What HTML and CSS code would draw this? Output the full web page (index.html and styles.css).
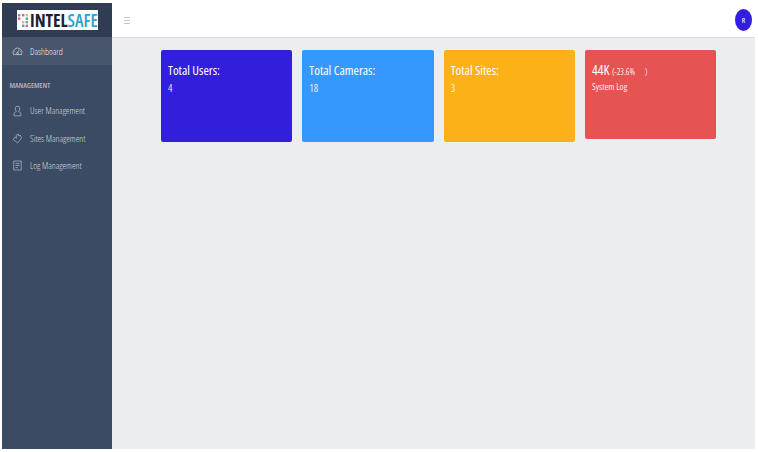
FILE: index.html
```html
<!DOCTYPE html>
<html lang="en">
<head>
<meta charset="utf-8">
<title>Intelsafe Dashboard</title>
<link rel="stylesheet" href="styles.css">
</head>
<body>
<div class="app">
  <aside class="sidebar">
    <div class="brand">
      <div class="logo">
        <svg class="logo-dots" width="10" height="13" viewBox="0 0 10 13">
          <g>
            <rect x="0" y="0" width="2.400" height="2.400" fill="#8a8fb0"/><rect x="4" y="0" width="2.400" height="2.400" fill="#e05a9a"/><rect x="7.600" y="0" width="2.400" height="2.400" fill="#d9c24a"/>
            <rect x="0" y="3.500" width="2.400" height="2.400" fill="#e05a9a"/><rect x="7.600" y="3.500" width="2.400" height="2.400" fill="#35a8c8"/>
            <rect x="4" y="7" width="2.400" height="2.400" fill="#d9c24a"/><rect x="7.600" y="7" width="2.400" height="2.400" fill="#8a8fb0"/>
            <rect x="4" y="10.600" width="2.400" height="2.400" fill="#35a8c8"/><rect x="7.600" y="10.600" width="2.400" height="2.400" fill="#e05a9a"/>
          </g>
        </svg>
        <span class="logo-text"><span class="logo-dark">INTEL</span><span class="logo-blue">SAFE</span></span>
      </div>
    </div>
    <nav class="nav">
      <a class="nav-item active">
        <svg class="nav-icon" viewBox="0 0 16 16"><path d="M2.500 13a6.500 6.500 0 1 1 11 0l-1-.5H3.500zM8 9.500l2.500-4M8 9.500a1.300 1.300 0 1 0 .1 0M3.500 8h1M11.500 8h1"/></svg>
        <span class="nav-label">Dashboard</span>
      </a>
      <div class="nav-title"><span>MANAGEMENT</span></div>
      <a class="nav-item">
        <svg class="nav-icon icon-tall" viewBox="0 0 16 16"><path d="M8 1a3.200 3.200 0 0 1 3.200 3.200c0 2-1 3.800-1.500 4.800 1 .8 3.300 1 3.300 3v3H3v-3c0-2 2.300-2.200 3.300-3C5.800 8 4.800 6.200 4.800 4.200A3.200 3.200 0 0 1 8 1z"/></svg>
        <span class="nav-label">User Management</span>
      </a>
      <a class="nav-item">
        <svg class="nav-icon" viewBox="0 0 16 16"><path d="M9 1.500l.5 2.500 3-.5 1 3.500-1 2.500-4.500 5-6.500-5.500 3-3 2 1.500L6 3.500z"/></svg>
        <span class="nav-label">Sites Management</span>
      </a>
      <a class="nav-item">
        <svg class="nav-icon" viewBox="0 0 16 16"><path d="M2.500 1.500h11v13h-11zM5 5h6M5 8h6M5 11h3.500"/></svg>
        <span class="nav-label">Log Management</span>
      </a>
    </nav>
  </aside>
  <div class="content">
    <header class="topbar">
      <svg class="menu-icon" width="6" height="7" viewBox="0 0 6 7"><path d="M0 .5h6M0 3.500h6M0 6.500h6"/></svg>
      <div class="avatar">R</div>
    </header>
    <main class="main">
      <section class="card card-purple">
        <div class="card-title">Total Users:</div>
        <div class="card-value">4</div>
      </section>
      <section class="card card-blue">
        <div class="card-title">Total Cameras:</div>
        <div class="card-value">18</div>
      </section>
      <section class="card card-amber">
        <div class="card-title">Total Sites:</div>
        <div class="card-value">3</div>
      </section>
      <section class="card card-red">
        <div class="card-title card-title-big">44K <small class="delta">(-23.6%<span class="delta-gap"></span>)</small></div>
        <div class="card-sub">System Log</div>
      </section>
    </main>
  </div>
</div>
</body>
</html>
```
FILE: styles.css
```css
* { box-sizing: border-box; }
html, body { height: 100%; }
body {
  margin: 0;
  padding: 3px 3px 3px 2px;
  background: #fff;
  font-family: "Open Sans", "Noto Sans", sans-serif;
  font-stretch: 75%;
}
.app { display: flex; height: 100%; background: #ebedef; }
.sidebar { width: 110px; flex: none; background: #3c4b64; color: #fff; }
.brand {
  height: 34px;
  background: #303c54;
  display: flex;
  align-items: center;
  justify-content: center;
}
.logo {
  width: 81px;
  height: 20px;
  margin-left: 1px;
  background: #fff;
  display: flex;
  align-items: center;
  gap: 2px;
  padding-left: 1px;
}
.logo-dots { flex: none; }
.logo-text { font-size: 17.500px; font-weight: 700; line-height: 20px; white-space: nowrap; }
.logo-dark { color: #1d2233; }
.logo-blue { color: #2aa3c7; font-weight: 600; }
.nav { display: flex; flex-direction: column; }
.nav-item {
  display: flex;
  align-items: center;
  height: 27.500px;
  padding-left: 10px;
  color: rgba(255,255,255,.78);
}
.nav-item.active { background: rgba(255,255,255,.06); height: 28px; color: rgba(255,255,255,.95); }
.nav-icon { width: 11px; height: 11px; flex: none; fill: none; stroke: currentColor; stroke-width: 1.100; opacity: .75; }
.icon-tall { height: 12px; }
.nav-label { margin-left: 7px; font-size: 9.200px; font-weight: 300; white-space: nowrap; }
.nav-title {
  height: 32px;
  padding: 14px 0 0 7.500px;
  font-size: 7.500px;
  line-height: 12px;
  font-weight: 600;
  color: rgba(255,255,255,.6);
}
.content { flex: 1; min-width: 0; display: flex; flex-direction: column; }
.topbar {
  height: 35px;
  flex: none;
  background: #fff;
  border-bottom: 1px solid #d8dbe0;
  display: flex;
  align-items: center;
  justify-content: space-between;
  padding: 0 3px 0 12px;
}
.menu-icon { fill: none; stroke: #c4c7cd; stroke-width: 1; }
.avatar {
  width: 17px;
  height: 22px;
  border-radius: 50%;
  background: #321fdb;
  color: #fff;
  font-size: 7.500px;
  font-weight: 500;
  display: flex;
  align-items: center;
  justify-content: center;
}
.main {
  flex: 1;
  display: flex;
  align-items: flex-start;
  gap: 10px;
  padding: 12px 0 0 49px;
}
.card {
  width: 131.330px;
  height: 92px;
  padding: 12px 7px;
  border-radius: 2px;
  color: #fff;
}
.card-purple { background: #321fdb; }
.card-blue { background: #3399ff; }
.card-amber { background: #fbb117; }
.card-red { background: #e55353; height: 88.500px; }
.card-title { font-size: 13px; font-weight: 500; line-height: 17px; white-space: nowrap; }
.card-title-big { font-size: 13.500px; }
.card-value { font-size: 10.500px; font-weight: 400; line-height: 16px; margin-top: 1px; color: rgba(255,255,255,.88); }
.card-sub { font-size: 9.200px; font-weight: 400; line-height: 14px; color: rgba(255,255,255,.92); }
.delta { font-size: 8.500px; font-weight: 400; color: rgba(255,255,255,.9); }
.delta-gap { display: inline-block; width: 10px; }
```
